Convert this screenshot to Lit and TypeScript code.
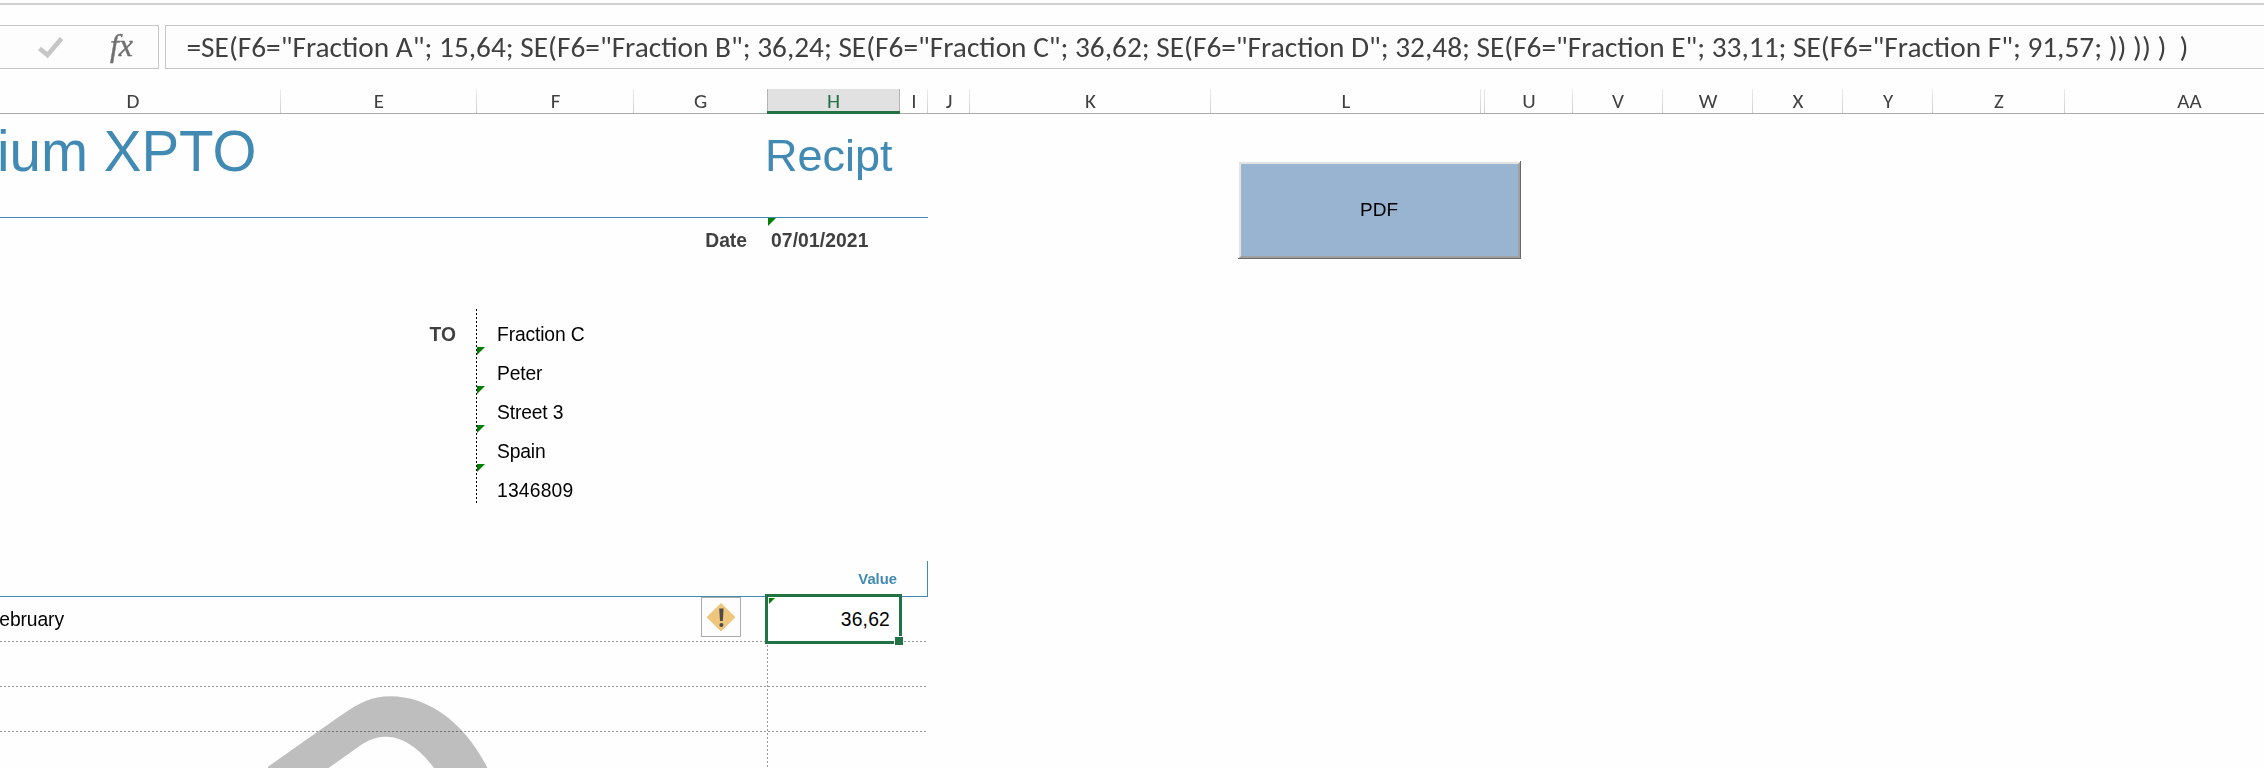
import { LitElement, html, css } from "lit";
import { customElement } from "lit/decorators.js";
import { classMap } from "lit/directives/class-map.js";

const COLUMNS: Array<[string, number]> = [
  ["D", 281], ["E", 196], ["F", 157], ["G", 133], ["H", 133], ["I", 28], ["J", 42],
  ["K", 241], ["L", 270], ["", 4], ["U", 88], ["V", 90], ["W", 90], ["X", 90],
  ["Y", 90], ["Z", 132], ["AA", 249],
];

const FORMULA =
  '=SE(F6="Fraction A"; 15,64; SE(F6="Fraction B"; 36,24; SE(F6="Fraction C"; 36,62; SE(F6="Fraction D"; 32,48; SE(F6="Fraction E"; 33,11; SE(F6="Fraction F"; 91,57; )) )) )  )';

const ADDRESS = ["Fraction C", "Peter", "Street 3", "Spain", "1346809"];

@customElement("formula-bar")
export class FormulaBar extends LitElement {
  static styles = css`
    :host { display: flex; flex: none; height: 44px; gap: 6px; }
    .tools, .entry { box-sizing: border-box; height: 44px; background: #fdfdfd; border: 1px solid #c6c6c6; }
    .tools { width: 159px; border-left: 0; }
    .entry { flex: 1; border-right: 0; }
    svg { display: block; }
    .fx { font: italic 32px "Liberation Serif", serif; fill: #707070; stroke: #707070; stroke-width: 0.4; }
    .formula { font-family: Carlito, Calibri, Lato, sans-serif; font-size: 28.8px; fill: #404040; white-space: pre; }
  `;
  render() {
    return html`
      <div class="tools">
        <svg width="158" height="42">
          <path d="M39.5 22.5 L47.5 29 L61.5 12.5" fill="none" stroke="#c6c6c6" stroke-width="4.6" />
          <text class="fx" x="110" y="30" textLength="23" lengthAdjust="spacingAndGlyphs">fx</text>
        </svg>
      </div>
      <div class="entry">
        <svg width="2098" height="42">
          <text class="formula" x="20.5" y="31" textLength="2002" lengthAdjust="spacingAndGlyphs">${FORMULA}</text>
        </svg>
      </div>
    `;
  }
}

@customElement("column-headers")
export class ColumnHeaders extends LitElement {
  static styles = css`
    :host { display: flex; flex: none; height: 25px; font: 21px/19px Carlito, Calibri, Lato, sans-serif; color: #404040; }
    .col { box-sizing: border-box; flex: none; height: 25px; padding: 3px 0 0 0; text-align: center; border-bottom: 1px solid #ababab;
      background: linear-gradient(#ececec, #cfcfcf) right top / 1px 100% no-repeat; }
    .first { padding-right: 15px; }
    .before { background: none; }
    .active { background: #e1e1e1; color: #217346; border-bottom: 3px solid #217346;
      box-shadow: inset 1px 0 #b5b5b5, inset -1px 0 #b5b5b5; }
  `;
  render() {
    return COLUMNS.map(
      ([name, width], i) => html`<div
        class=${classMap({ col: true, first: i === 0, active: name === "H", before: name === "G" })}
        style="width:${width}px"
      >${name}</div>`
    );
  }
}

@customElement("receipt-sheet")
export class ReceiptSheet extends LitElement {
  static styles = css`
    :host { display: flex; align-items: flex-start; height: 654px; overflow: hidden;
      font: 19.3px/22px "Liberation Sans", Arial, sans-serif; color: #000; }
    .receipt { flex: none; width: 928px; height: 654px; display: flex; flex-direction: column; }
    .head { box-sizing: border-box; height: 104px; border-bottom: 1px solid #418ab3; display: flex; color: #418ab3; flex: none; }
    .title { width: 768px; font-size: 56.5px; line-height: 64px; margin-left: -3px; padding-top: 6px; white-space: nowrap; }
    .kind { font-size: 45px; line-height: 52px; padding-top: 16px; }
    .dates { display: flex; flex: none; height: 91px; font-weight: bold; color: #404040; }
    .date-label { width: 747px; padding: 12px 20px 0 0; text-align: right; }
    .date { flex: 1; padding: 12px 0 0 3px; letter-spacing: 0.1px; }
    .date-cell { display: flex; flex: 1; }
    .flag { display: block; flex: none; width: 8px; height: 8px; background: #008000; clip-path: polygon(0 0, 100% 0, 0 100%); }
    .date-cell .flag { margin: 0 -8px 0 1px; }
    .address { display: flex; flex: none; height: 195px; }
    .to { width: 456px; padding-right: 20px; text-align: right; font-weight: bold; color: #404040; padding-top: 15px; }
    .lines { padding-left: 1px; background: repeating-linear-gradient(#000 0 2px, transparent 2px 4px) left top / 1px 100% no-repeat; }
    .line { display: flex; height: 39px; }
    .line .flag { margin-top: -1px; }
    .line .text { padding: 15px 0 0 12px; letter-spacing: -0.15px; }
    .line:last-child .text { letter-spacing: 0.2px; }
    .no-flag { visibility: hidden; }
    .value-head { box-sizing: border-box; flex: none; height: 36px; margin-top: 57px; border: solid #418ab3; border-width: 0 1px 1px 0;
      padding: 9px 30px 0 0; text-align: right; font-weight: bold; font-size: 14.8px; line-height: 18px; color: #418ab3; }
    .items { position: relative; flex: none; height: 171px;
      background:
        repeating-linear-gradient(90deg, #999 0 2px, transparent 2px 4px) 0 44px / 928px 1px no-repeat,
        repeating-linear-gradient(90deg, #999 0 2px, transparent 2px 4px) 0 89px / 928px 1px no-repeat,
        repeating-linear-gradient(90deg, #999 0 2px, transparent 2px 4px) 0 134px / 928px 1px no-repeat,
        repeating-linear-gradient(#999 0 2px, transparent 2px 4px) 767px 48px / 1px 130px no-repeat; }
    .watermark { position: absolute; left: 0; top: 0; mix-blend-mode: multiply; }
    .item { display: flex; height: 45px; }
    .month { width: 701px; padding-top: 12px; }
    .month span { margin-left: -6px; letter-spacing: -0.1px; }
    .alert { box-sizing: border-box; flex: none; width: 40px; height: 40px; border: 1px solid #ababab; background: #fdfdfd; }
    .selected { position: absolute; box-sizing: border-box; left: 765px; top: -3px; width: 137px; height: 50px; border: 3px solid #217346;
      display: flex; justify-content: space-between; padding: 1px 9px 0 1px; background: #fff; }
    .selected .flag { width: 6px; height: 6px; }
    .amount { padding-top: 11px; letter-spacing: 0.2px; }
    .handle { position: absolute; right: -5px; bottom: -5px; width: 8px; height: 8px; background: #217346; border: 1px solid #fff; }
    .pdf { box-sizing: border-box; flex: none; margin: 47px 0 0 310px; width: 283px; height: 98px; border: solid; border-width: 0 1px 1px 0;
      border-color: #696969; padding: 1px 0 0 1px; display: flex; }
    .face { flex: 1; border: 2px solid; border-color: #e3e3e3 #a0a0a0 #a0a0a0 #e3e3e3; background: #99b4d1; display: flex;
      align-items: center; justify-content: center; font-size: 19px; padding: 0 1px 0 0; }
  `;
  render() {
    return html`
      <div class="receipt">
        <div class="head"><div class="title">ium XPTO</div><div class="kind">Recipt</div></div>
        <div class="dates">
          <div class="date-label">Date</div>
          <div class="date-cell"><i class="flag"></i><div class="date">07/01/2021</div></div>
        </div>
        <div class="address">
          <div class="to">TO</div>
          <div class="lines">
            ${ADDRESS.map(
              (text, i) => html`<div class="line">
                <i class=${classMap({ flag: true, "no-flag": i === 0 })}></i><span class="text">${text}</span>
              </div>`
            )}
          </div>
        </div>
        <div class="value-head">Value</div>
        <div class="items">
          <div class="item">
            <div class="month"><span>february</span></div>
            <div class="alert">
              <svg width="38" height="38">
                <path d="M19 5.5 L33 19.3 L19 33 L5 19.3Z" fill="#eec77c" stroke="#eec77c" stroke-linejoin="round" />
                <path d="M17.2 10.5 h4.4 l-.8 12.5 h-2.8Z" fill="#4b4b4b" />
                <circle cx="19.4" cy="27" r="2" fill="#4b4b4b" />
              </svg>
            </div>
          </div>
          <svg class="watermark" width="760" height="171" viewBox="0 597 760 171">
            <path fill="#bfbfbf" d="M268 766.7 L340 716 C360 702 372 696.2 390 696.2 C429 696.2 465 723 487.5 768 L434 768 C420 749 403 736.7 387 736.7 C377 736.7 370 739 361 745 L328.5 768 H268Z" />
          </svg>
          <div class="selected"><i class="flag"></i><span class="amount">36,62</span><i class="handle"></i></div>
        </div>
      </div>
      <div class="pdf"><div class="face">PDF</div></div>
    `;
  }
}

@customElement("app-root")
export class AppRoot extends LitElement {
  static styles = css`
    :host { display: flex; flex-direction: column; width: 2264px; height: 768px; overflow: hidden; background: #fefefe; }
    .ribbon-edge { flex: none; height: 2px; margin: 3px 0 20px; background: #d0d0d0; }
    column-headers { margin-top: 20px; }
  `;
  render() {
    return html`
      <div class="ribbon-edge"></div>
      <formula-bar></formula-bar>
      <column-headers></column-headers>
      <receipt-sheet></receipt-sheet>
    `;
  }
}
